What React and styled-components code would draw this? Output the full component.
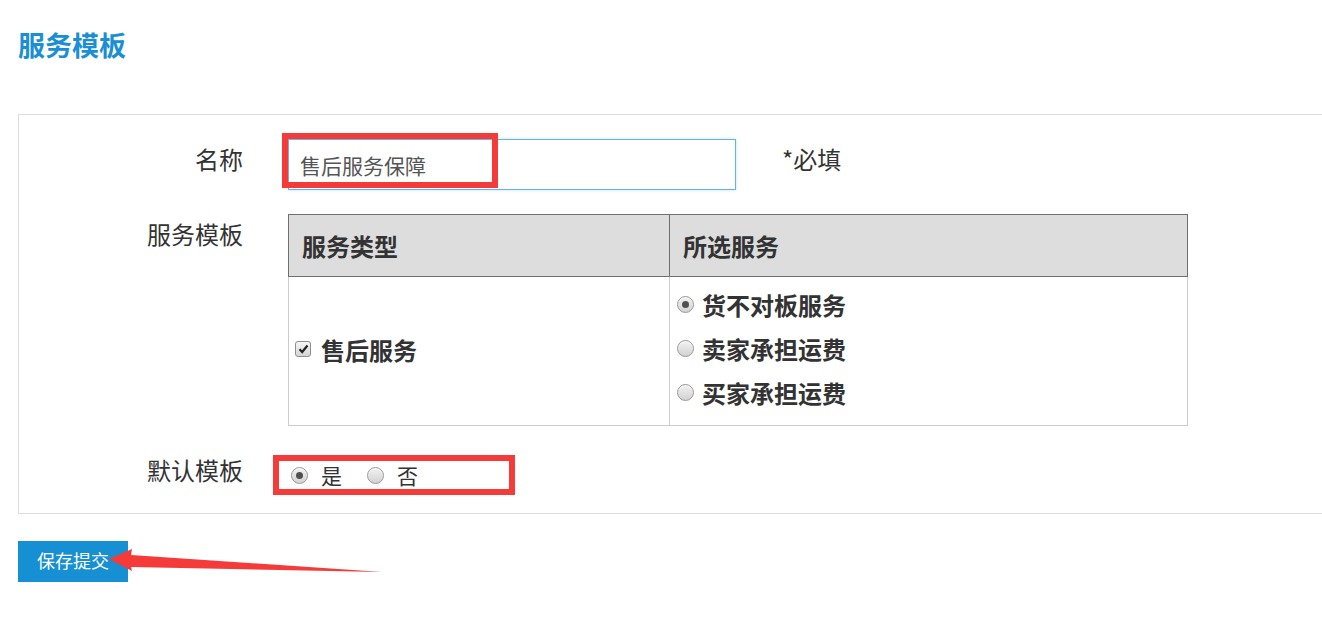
import React from 'react';
import styled, {createGlobalStyle} from 'styled-components';

const GlobalStyle = createGlobalStyle`
    html, body {
        margin: 0;
        padding: 0;
        background: #fff;
        font-family: "Noto Sans CJK SC", "Noto Sans", sans-serif;
        color: #333;
    }
`

const services = [
    {name: '货不对板服务', checked: true},
    {name: '卖家承担运费', checked: false},
    {name: '买家承担运费', checked: false},
]

const Radio = ({checked}) => (
    <RadioDot $checked={checked} />
)

const App = () => {
    return (
        <Page>
            <GlobalStyle />
            <Title>服务模板</Title>

            <Panel>
                <Label>名称</Label>
                <Field>
                    <InputWrap>
                        <TextInput defaultValue="售后服务保障" />
                        <Mark />
                    </InputWrap>
                    <Required>*必填</Required>
                </Field>

                <Label>服务模板</Label>
                <Table>
                    <colgroup>
                        <col style={{width: 381}} />
                        <col />
                    </colgroup>
                    <thead>
                        <tr>
                            <HeadCell>服务类型</HeadCell>
                            <HeadCell>所选服务</HeadCell>
                        </tr>
                    </thead>
                    <tbody>
                        <tr>
                            <TypeCell>
                                <TypeItem>
                                    <Check>
                                        <svg width="11" height="10" viewBox="0 0 11 10">
                                            <path d="M1.5 5.2 L4.2 8 L9.5 1.5" fill="none" stroke="#222" strokeWidth="2.2" />
                                        </svg>
                                    </Check>
                                    售后服务
                                </TypeItem>
                            </TypeCell>
                            <ServiceCell>
                                {services.map(s => (
                                    <ServiceRow key={s.name}>
                                        <Radio checked={s.checked} />
                                        {s.name}
                                    </ServiceRow>
                                ))}
                            </ServiceCell>
                        </tr>
                    </tbody>
                </Table>

                <Label $tight>默认模板</Label>
                <DefaultBox>
                    <Radio checked />
                    <Choice>是</Choice>
                    <Radio />
                    <Choice>否</Choice>
                </DefaultBox>
            </Panel>

            <Footer>
                <SubmitButton>保存提交</SubmitButton>
                <Arrow width="400" height="60" viewBox="0 0 400 60">
                    <polygon
                        points="91,18 114,8 113,14 364,31 113,26 114,30"
                        fill="#f53a3a"
                    />
                </Arrow>
            </Footer>
        </Page>
    )
}

const Page = styled.div`
    padding: 25px 0 0 18px;
    width: 1304px;
`

const Title = styled.h2`
    margin: 0 0 50px;
    font-size: 27px;
    line-height: 39px;
    font-weight: 700;
    color: #1a8fd5;
`

const Panel = styled.div`
    border: 1px solid #dddddd;
    border-right: none;
    display: grid;
    grid-template-columns: 224px 1fr;
    column-gap: 45px;
    row-gap: 24px;
    padding: 24px 0 18px;
    align-items: start;
`

const Label = styled.div`
    text-align: right;
    font-size: 24px;
    line-height: 36px;
    padding-top: ${p => p.$tight ? '0' : '2px'};
    margin-top: ${p => p.$tight ? '2px' : '0'};
    color: #333;
`

const Field = styled.div`
    display: flex;
    align-items: flex-start;
`

const InputWrap = styled.div`
    position: relative;
    width: 448px;
    height: 51px;
`

const TextInput = styled.input`
    box-sizing: border-box;
    width: 100%;
    height: 100%;
    border: 1px solid #66b3e6;
    box-shadow: 0 0 3px rgba(102, 179, 230, 0.4);
    padding: 0 11px;
    font-family: "Noto Sans CJK SC", sans-serif;
    font-size: 21px;
    color: #555;
    outline: none;
    background: #fff;
`

const Mark = styled.span`
    position: absolute;
    left: -6px;
    top: -6px;
    width: 216px;
    height: 55px;
    box-sizing: border-box;
    border: 6px solid #f53a3a;
    pointer-events: none;
`

const Required = styled.span`
    margin-left: 46px;
    font-size: 24px;
    line-height: 36px;
    padding-top: 2px;
    color: #333;
`

const Table = styled.table`
    width: 900px;
    table-layout: fixed;
    border-collapse: collapse;
    font-size: 24px;
    font-weight: 700;
    color: #333;
`

const HeadCell = styled.th`
    height: 61px;
    padding: 0 13px;
    text-align: left;
    background: #dddddd;
    border: 1px solid #6f6f6f;
    font-weight: 700;
`

const TypeCell = styled.td`
    border: 1px solid #cccccc;
    padding: 0 6px;
    vertical-align: middle;
    height: 146px;
`

const TypeItem = styled.div`
    display: flex;
    align-items: center;
    gap: 10px;
    white-space: nowrap;
    margin-top: -4px;
`

const ServiceCell = styled.td`
    border: 1px solid #cccccc;
    padding: 5px 7px 11px;
    vertical-align: top;
`

const ServiceRow = styled.div`
    display: flex;
    align-items: center;
    gap: 8px;
    height: 44px;
`

const Check = styled.span`
    display: inline-flex;
    flex: none;
    align-items: center;
    justify-content: center;
    box-sizing: border-box;
    width: 16px;
    height: 16px;
    border: 1px solid #8f8f8f;
    border-radius: 3px;
    background: linear-gradient(#f8f8f8, #d4d4d4);
`

const RadioDot = styled.span`
    position: relative;
    flex: none;
    box-sizing: border-box;
    width: 17px;
    height: 17px;
    border-radius: 50%;
    border: 1px solid #999;
    background: linear-gradient(#f2f2f2, #d2d2d2);
    box-shadow: inset 0 1px 1px rgba(255, 255, 255, 0.8);

    &::after {
        content: '';
        display: ${p => p.$checked ? 'block' : 'none'};
        position: absolute;
        left: 4px;
        top: 4px;
        width: 7px;
        height: 7px;
        border-radius: 50%;
        background: #505050;
    }
`

const DefaultBox = styled.div`
    display: flex;
    align-items: center;
    box-sizing: border-box;
    width: 242px;
    height: 40px;
    margin-left: -15px;
    margin-top: 5px;
    padding-left: 12px;
    border: 6px solid #f53a3a;
`

const Choice = styled.span`
    font-size: 21px;
    line-height: 28px;
    margin: 0 25px 0 13px;
    color: #333;
`

const Footer = styled.div`
    position: relative;
    margin-top: 27px;
    height: 60px;
`

const SubmitButton = styled.button`
    height: 41px;
    padding: 0 19px 3px;
    border: none;
    background: #1690d2;
    color: #fff;
    font-family: "Noto Sans CJK SC", sans-serif;
    font-size: 18px;
    cursor: pointer;
`

const Arrow = styled.svg`
    position: absolute;
    left: 0;
    top: 0;
    pointer-events: none;
`

export default App
